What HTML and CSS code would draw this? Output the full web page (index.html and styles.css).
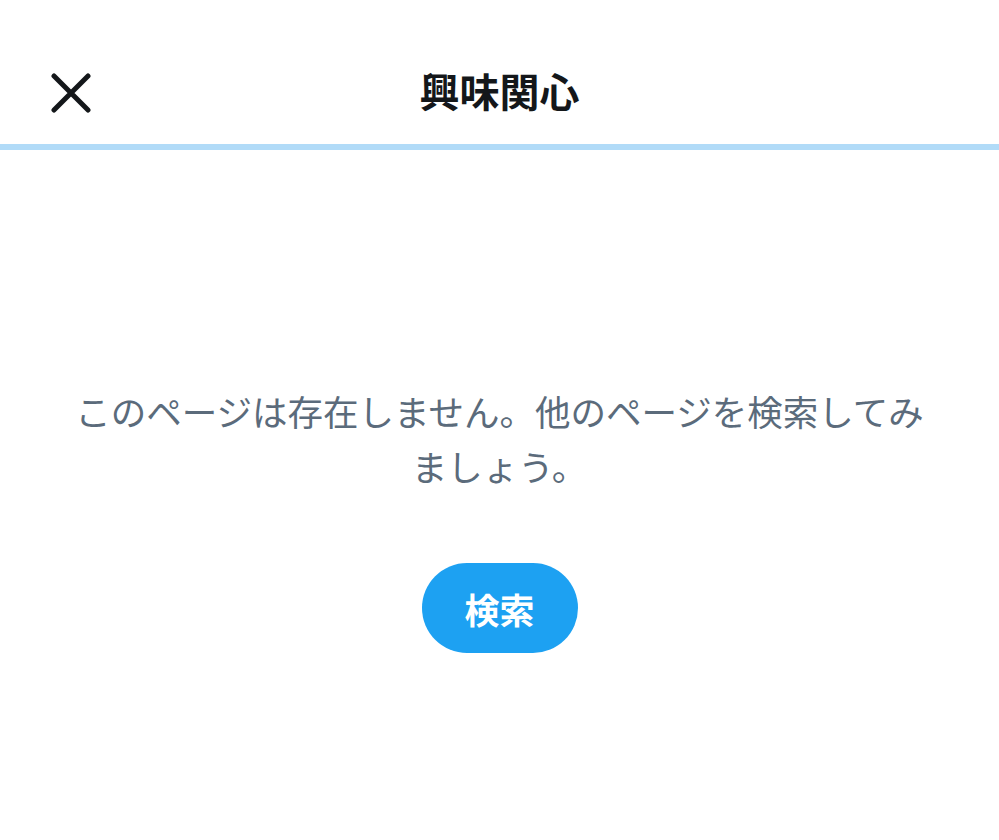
FILE: index.html
```html
<!DOCTYPE html>
<html lang="ja">
<head>
  <meta charset="UTF-8" />
  <title>興味関心</title>
  <link rel="stylesheet" href="styles.css">
</head>
<body>
  <header class="topbar">
    <button class="close-btn" aria-label="閉じる">
      <svg viewBox="0 0 40 40" width="40" height="40">
        <path d="M3 3 L37 37 M37 3 L3 37" stroke="#14171a" stroke-width="5" stroke-linecap="round" fill="none"/>
      </svg>
    </button>
    <h1 class="title">興味関心</h1>
  </header>

  <main class="empty">
    <p class="empty-text">このページは存在しません。他のページを検索してみましょう。</p>
    <button class="search-btn">検索</button>
  </main>
</body>
</html>
```

FILE: styles.css
```css
body {
  margin: 0;
  font-family: "Noto Sans CJK JP", "Noto Sans", sans-serif;
  background: #fff;
  color: #14171a;
}
.topbar {
  position: relative;
  height: 144px;
  border-bottom: 6px solid #b1dbf8;
  display: flex;
  align-items: center;
  justify-content: center;
}
.close-btn {
  position: absolute;
  left: 51px;
  top: 73px;
  padding: 0;
  border: none;
  background: none;
  width: 40px;
  height: 40px;
}
.close-btn svg {
  display: block;
}
.title {
  margin: 0;
  margin-top: 36px;
  font-size: 40px;
  font-weight: 700;
  line-height: 1;
}
.empty {
  display: flex;
  flex-direction: column;
  align-items: center;
  padding: 0 64px;
}
.empty-text {
  margin: 233px 0 0;
  font-size: 35.5px;
  line-height: 55px;
  color: #5b6b7b;
  text-align: center;
}
.search-btn {
  margin-top: 70px;
  width: 156px;
  height: 90px;
  border: none;
  border-radius: 45px;
  background: #1da1f2;
  color: #fff;
  font-family: inherit;
  font-size: 35px;
  font-weight: 700;
}
```
